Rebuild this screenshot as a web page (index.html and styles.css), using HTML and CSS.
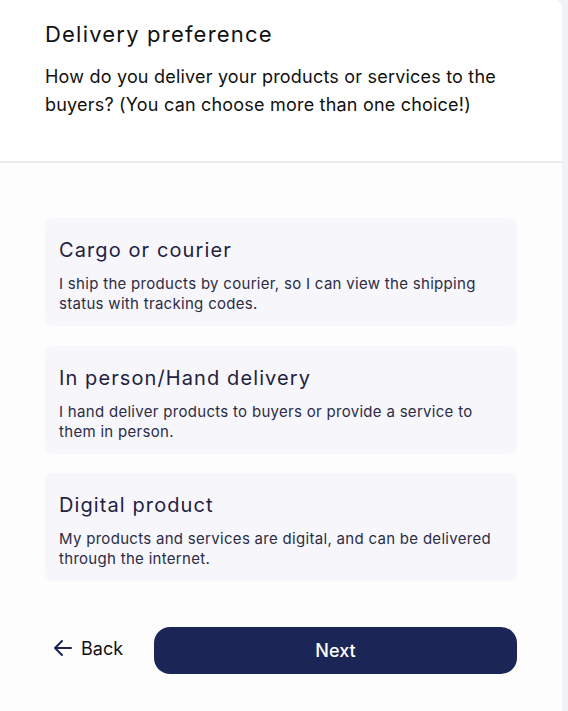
FILE: index.html
```html
<!DOCTYPE html>
<html>
<head>
<meta charset="utf-8">
<link rel="stylesheet" href="styles.css">
</head>
<body>
<div class="panel">
  <header class="head">
    <h1 class="title">Delivery preference</h1>
    <p class="lead">How do you deliver your products or services to the buyers? (You can choose more than one choice!)</p>
  </header>
  <main class="body">
    <div class="options">
      <div class="option">
        <h2 class="opt-title">Cargo or courier</h2>
        <p class="opt-desc">I ship the products by courier, so I can view the shipping status with tracking codes.</p>
      </div>
      <div class="option">
        <h2 class="opt-title">In person/Hand delivery</h2>
        <p class="opt-desc">I hand deliver products to buyers or provide a service to them in person.</p>
      </div>
      <div class="option">
        <h2 class="opt-title">Digital product</h2>
        <p class="opt-desc">My products and services are digital, and can be delivered through the internet.</p>
      </div>
    </div>
    <div class="actions">
      <button class="back">
        <svg width="20" height="18" viewBox="0 0 20 18" fill="none" stroke="#1b2656" stroke-width="2" stroke-linecap="round" stroke-linejoin="round"><path d="M18 9H2M9 2L2 9l7 7"/></svg>
        <span>Back</span>
      </button>
      <button class="next">Next</button>
    </div>
  </main>
</div>
</body>
</html>
```
FILE: styles.css
```css
html, body {
  margin: 0;
  padding: 0;
}
body {
  background: #f1f2f6;
  font-family: Inter, "Noto Sans", sans-serif;
  width: 568px;
  height: 711px;
  overflow: hidden;
}
.panel {
  width: 562px;
  height: 711px;
  background: #fdfdfe;
  border-top-right-radius: 8px;
  display: flex;
  flex-direction: column;
}
.head {
  background: #fff;
  border-top-right-radius: 8px;
  padding: 19px 45px 0 45px;
  height: 142px;
  border-bottom: 2px solid #ebebf0;
}
.title {
  margin: 0;
  font-size: 22px;
  font-weight: 400;
  line-height: 30px;
  letter-spacing: 1.2px;
  color: #111111;
}
.lead {
  margin: 14px 0 0;
  font-size: 18px;
  line-height: 28px;
  letter-spacing: 0.2px;
  color: #111111;
}
.body {
  padding: 55px 45px 0 45px;
}
.options {
  display: flex;
  flex-direction: column;
  gap: 19.5px;
}
.option {
  background: #f7f6fb;
  border-radius: 8px;
  height: 108px;
  box-sizing: border-box;
  padding: 18px 14px 0 14px;
}
.opt-title {
  margin: 0;
  font-size: 20px;
  font-weight: 400;
  line-height: 28px;
  letter-spacing: 1.1px;
  color: #1f2240;
}
.opt-desc {
  margin: 10px 0 0;
  font-size: 15px;
  line-height: 20px;
  letter-spacing: 0.3px;
  color: #2b2d45;
}
.actions {
  display: flex;
  align-items: center;
  margin-top: 46px;
}
.back {
  display: flex;
  align-items: center;
  gap: 8px;
  background: none;
  border: 0;
  padding: 0 0 0 8px;
  margin-bottom: 5px;
  width: 109px;
  font-family: inherit;
  font-size: 18px;
  color: #111;
  cursor: pointer;
}
.next {
  flex: 1;
  height: 47px;
  border: 0;
  border-radius: 16px;
  background: #1b2656;
  color: #fff;
  font-family: inherit;
  font-size: 18px;
  font-weight: 500;
  cursor: pointer;
}
```
